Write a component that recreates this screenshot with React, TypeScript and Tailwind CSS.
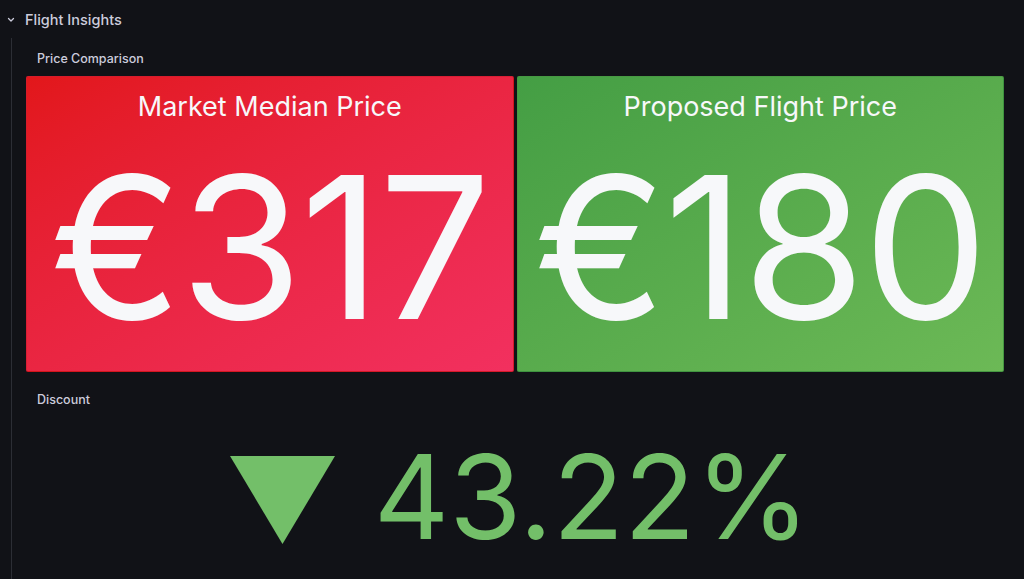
export default function App() {
  return (
    <div
      className="w-[1024px] h-[579px] overflow-hidden bg-[#111217] text-[#ccccdc]"
      style={{ fontFamily: "Inter, 'Noto Sans', sans-serif" }}
    >
      {/* row header */}
      <div className="h-[38px] pt-[1px] flex items-center">
        <svg className="ml-[6px] w-[10px] h-[10px]" viewBox="0 0 10 10" fill="none">
          <path d="M2.5 3.5 L5 6 L7.5 3.5" stroke="#ccccdc" strokeWidth="1.3" strokeLinecap="round" strokeLinejoin="round" />
        </svg>
        <span className="ml-[9px] text-[14.5px] font-medium">Flight Insights</span>
      </div>

      <div className="ml-[11px] border-l border-[#2c2e35] h-[541px] pl-[14px] pr-[20px]">
        {/* Price comparison panel */}
        <div className="h-[38px] pt-[4px] flex items-center pl-[11px] text-[12.5px] font-medium">
          Price Comparison
        </div>
        <div className="flex gap-[3px] h-[296px]">
          <div className="flex-1 rounded-[2px] border border-[#c8141a]/60 bg-gradient-to-br from-[#e2171a] to-[#f2305f] flex flex-col items-center text-[#f7f8fa]">
            <div className="mt-[13px] text-[27px] leading-[34px]">Market Median Price</div>
            <div className="mt-[13px] text-[198px] leading-[220px] tracking-[-2px]">€317</div>
          </div>
          <div className="flex-1 rounded-[2px] border border-[#3a8a3c]/60 bg-gradient-to-br from-[#449e44] to-[#6cb956] flex flex-col items-center text-[#f7f8fa]">
            <div className="mt-[13px] text-[27px] leading-[34px]">Proposed Flight Price</div>
            <div className="mt-[13px] text-[198px] leading-[220px] tracking-[-2px]">€180</div>
          </div>
        </div>

        {/* Discount panel */}
        <div className="h-[52px] pt-[4px] flex items-center pl-[11px] text-[12.5px] font-medium">
          Discount
        </div>
        <div className="flex items-center justify-center h-[150px] pb-[4px] pl-[10px]">
          <svg width="105" height="88" viewBox="0 0 105 88" className="mt-[6px]">
            <polygon points="0,0 105,0 52.5,88" fill="#73bf69" />
          </svg>
          <div className="ml-[39px] text-[117px] leading-[130px] text-[#73bf69]">43.22%</div>
        </div>
      </div>
    </div>
  );
}
